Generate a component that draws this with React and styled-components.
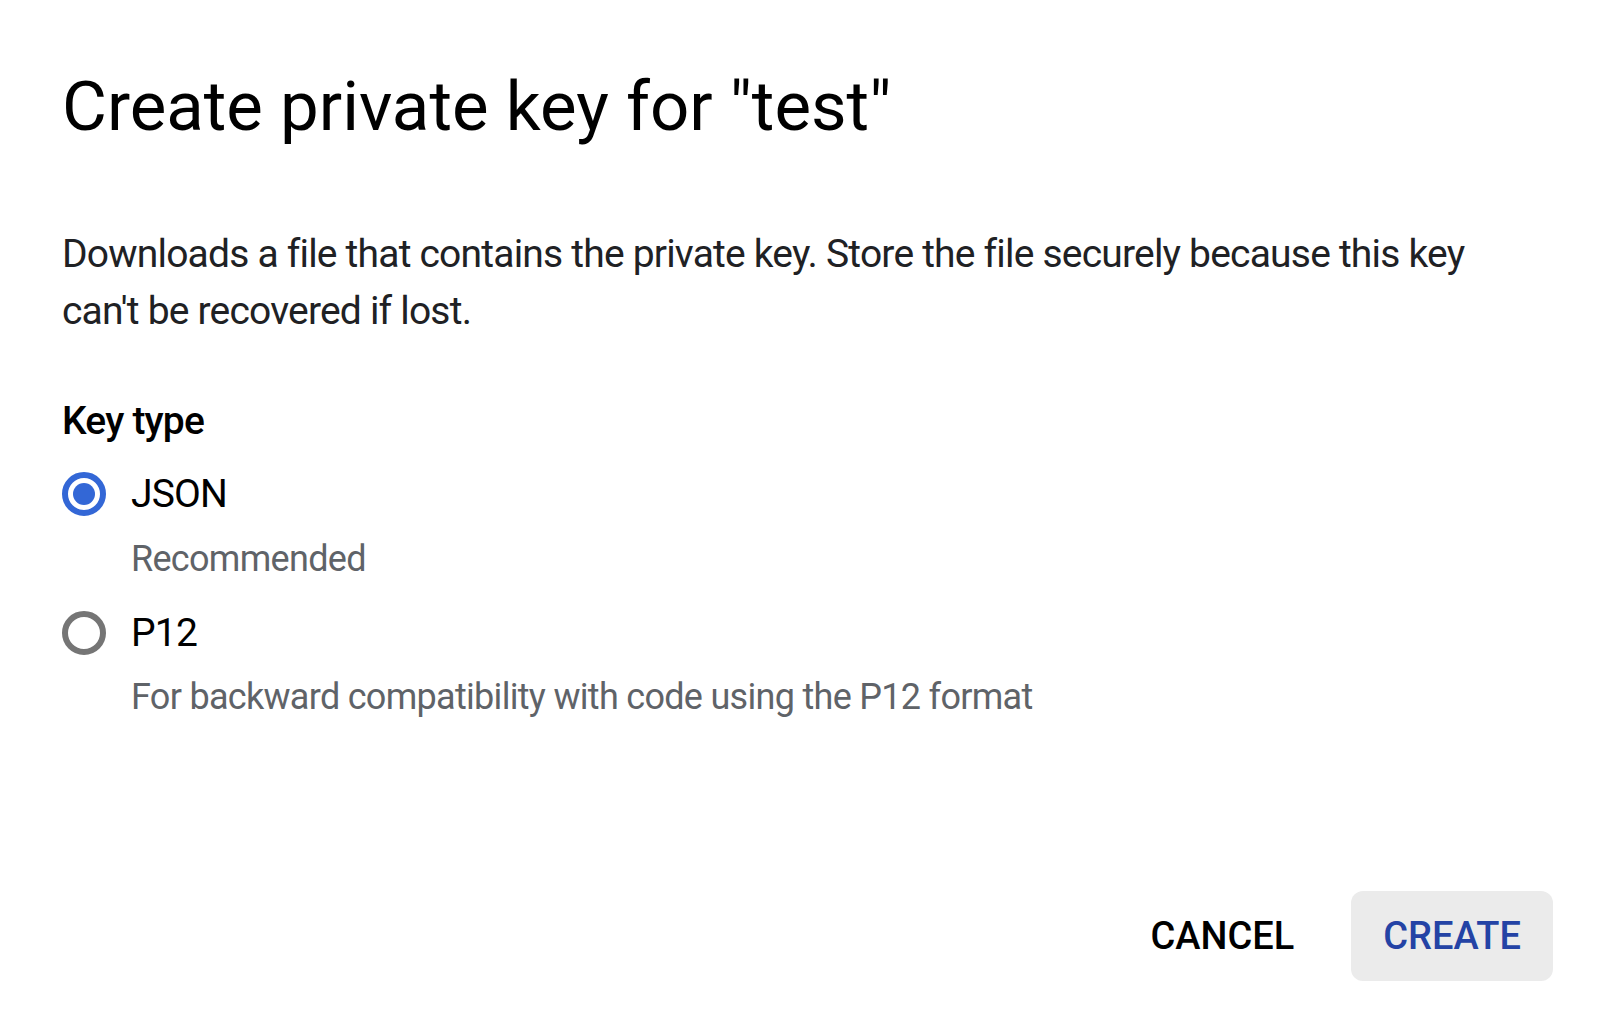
import React, { useState } from 'react';
import styled, { createGlobalStyle } from 'styled-components';

const GlobalStyle = createGlobalStyle`
    html, body {
        margin: 0;
        padding: 0;
        background: #fff;
    }
    body {
        font-family: Roboto, "Liberation Sans", Arial, sans-serif;
        color: #202124;
    }
`

const Dialog = styled.div`
    width: 1600px;
    height: 1024px;
    box-sizing: border-box;
    padding: 66px 47px 0 62px;
    display: flex;
    flex-direction: column;
`

const Title = styled.h1`
    margin: 0;
    font-size: 69px;
    line-height: 82px;
    font-weight: 400;
    color: #000;
`

const Text = styled.p`
    margin: 78px 0 0;
    font-size: 39px;
    letter-spacing: -0.8px;
    line-height: 57px;
    color: #202124;
    max-width: 1420px;
`

const Label = styled.div`
    margin-top: 53px;
    font-size: 39px;
    letter-spacing: -0.8px;
    line-height: 56px;
    font-weight: 500;
    color: #000;
`

const Options = styled.div`
    display: flex;
    flex-direction: column;
    margin-top: 17px;
`

const Option = styled.label`
    display: flex;
    align-items: center;
    height: 56px;
    gap: 25px;
    font-size: 39px;
    letter-spacing: -0.8px;
    color: #000;
    cursor: pointer;
    margin-top: ${p => (p.$first ? '0' : '18px')};
`

const Radio = styled.span`
    width: 44px;
    height: 44px;
    box-sizing: border-box;
    border-radius: 50%;
    border: 6px solid ${p => (p.$on ? '#3367d6' : '#757575')};
    display: flex;
    align-items: center;
    justify-content: center;
    &::after {
        content: '';
        width: 22px;
        height: 22px;
        border-radius: 50%;
        background: #3367d6;
        display: ${p => (p.$on ? 'block' : 'none')};
    }
`

const Hint = styled.div`
    margin: ${p => p.$top}px 0 0 69px;
    font-size: 36px;
    letter-spacing: -0.7px;
    line-height: 56px;
    color: #5f6368;
`

const Footer = styled.div`
    margin-top: 166px;
    display: flex;
    justify-content: flex-end;
    gap: 25px;
`

const Button = styled.button`
    height: 90px;
    padding: 0 32px;
    border: none;
    border-radius: 12px;
    font-family: inherit;
    font-size: 38px;
    font-weight: 500;
    letter-spacing: 0;
    background: ${p => (p.$primary ? '#ebebeb' : 'transparent')};
    color: ${p => (p.$primary ? '#2443a5' : '#000')};
    cursor: pointer;
`

const types = [
    { id: 'json', name: 'JSON', hint: 'Recommended', top: 9 },
    { id: 'p12', name: 'P12', hint: 'For backward compatibility with code using the P12 format', top: 8 }
]

export default function App() {
    const [type, setType] = useState('json')
    return (
        <>
            <GlobalStyle />
            <Dialog>
                <Title>Create private key for "test"</Title>
                <Text>
                    Downloads a file that contains the private key. Store the file securely because this key
                    can't be recovered if lost.
                </Text>
                <Label>Key type</Label>
                <Options>
                    {types.map((t, i) => (
                        <div key={t.id}>
                            <Option $first={i === 0} onClick={() => setType(t.id)}>
                                <Radio $on={type === t.id} />
                                {t.name}
                            </Option>
                            <Hint $top={t.top}>{t.hint}</Hint>
                        </div>
                    ))}
                </Options>
                <Footer>
                    <Button>CANCEL</Button>
                    <Button $primary>CREATE</Button>
                </Footer>
            </Dialog>
        </>
    )
}
